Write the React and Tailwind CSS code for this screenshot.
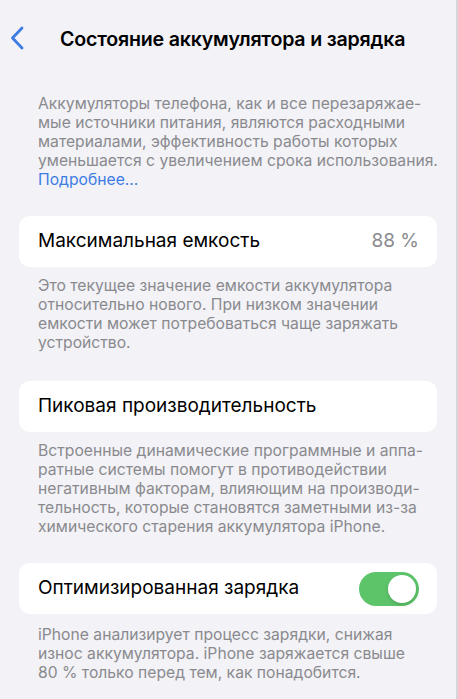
import { useState } from 'react'

const font = { fontFamily: 'Inter, "Noto Sans", sans-serif' }

const Footnote = ({ children, className = '' }) => (
  <p className={`whitespace-nowrap pl-[38px] pr-[16px] text-[15.7px] leading-[19px] text-[#8a8a8e] ${className}`}>{children}</p>
)

const Row = ({ children, className = '' }) => (
  <div className={`mx-[19px] flex h-[51px] items-center justify-between rounded-[11px] bg-white pl-[19px] pr-[18px] ${className}`}>
    {children}
  </div>
)

const Toggle = ({ on, onChange }) => (
  <button
    onClick={() => onChange(!on)}
    className={`flex h-[34px] w-[60px] items-center rounded-full p-[3px] transition-colors ${on ? 'bg-[#5ec46a] justify-end' : 'bg-[#e5e5ea] justify-start'}`}
  >
    <span className="h-[28px] w-[28px] rounded-full bg-white shadow-[0_2px_4px_rgba(0,0,0,0.15)]" />
  </button>
)

export default function App() {
  const [optimized, setOptimized] = useState(true)

  return (
    <div style={font} className="min-h-[699px] w-[458px] border-r-2 border-[#d6d6da] bg-[#f2f2f7] pb-6 antialiased">
      {/* Nav bar */}
      <div className="relative flex h-[76px] items-start pt-[25px]">
        <button className="absolute left-[9px] top-[26px] text-[#3d7de3]">
          <svg width="17" height="24" viewBox="0 0 17 24" fill="none">
            <path d="M13 2 L3.5 12 L13 22" stroke="currentColor" strokeWidth="2.8" strokeLinecap="round" strokeLinejoin="round" />
          </svg>
        </button>
        <h1 className="pl-[60px] text-[19.6px] font-semibold tracking-[-0.2px] text-black">Состояние аккумулятора и зарядка</h1>
      </div>

      <Footnote className="mt-[18px]">
        Аккумуляторы телефона, как и все перезаряжае-<br />
        мые источники питания, являются расходными<br />
        материалами, эффективность работы которых<br />
        уменьшается с увеличением срока использования.<br />
        <span className="text-[#3d7de3]">Подробнее…</span>
      </Footnote>

      <Row className="mt-[27px]">
        <span className="text-[19px] text-black">Максимальная емкость</span>
        <span className="text-[19px] text-[#8a8a8e]">88 %</span>
      </Row>
      <Footnote className="mt-[9px]">
        Это текущее значение емкости аккумулятора<br />
        относительно нового. При низком значении<br />
        емкости может потребоваться чаще заряжать<br />
        устройство.
      </Footnote>

      <Row className="mt-[29px]">
        <span className="text-[19px] text-black">Пиковая производительность</span>
      </Row>
      <Footnote className="mt-[9px]">
        Встроенные динамические программные и аппа-<br />
        ратные системы помогут в противодействии<br />
        негативным факторам, влияющим на производи-<br />
        тельность, которые становятся заметными из-за<br />
        химического старения аккумулятора iPhone.
      </Footnote>

      <Row className="mt-[27px]">
        <span className="text-[19px] text-black">Оптимизированная зарядка</span>
        <Toggle on={optimized} onChange={setOptimized} />
      </Row>
      <Footnote className="mt-[11px]">
        iPhone анализирует процесс зарядки, снижая<br />
        износ аккумулятора. iPhone заряжается свыше<br />
        80 % только перед тем, как понадобится.
      </Footnote>
    </div>
  )
}
